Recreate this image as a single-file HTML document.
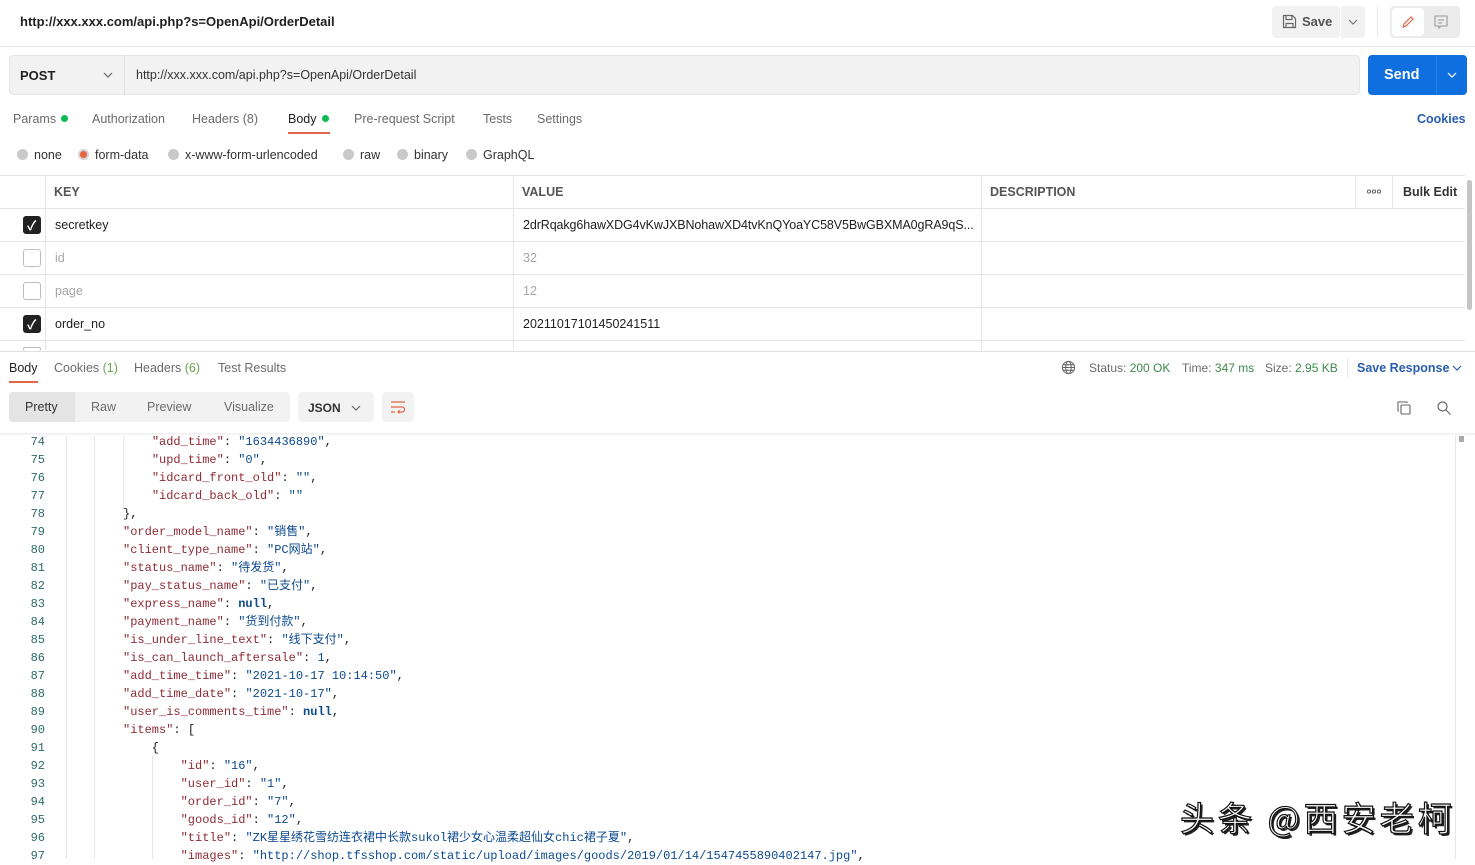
<!DOCTYPE html>
<html><head><meta charset="utf-8"><style>
*{box-sizing:border-box;margin:0;padding:0}
body{width:1475px;height:859px;overflow:hidden;background:#fff;font-family:"Liberation Sans","Noto Sans CJK SC",sans-serif;font-size:12.5px;color:#212121;position:relative}
.a{position:absolute;white-space:nowrap}
.g{color:#6b6b6b}
.code{font-family:"Liberation Mono","Noto Sans CJK SC",monospace;font-size:12px}
.k{color:#8e2b35}.s{color:#0d4a8f}.n{color:#0d4a8f;font-weight:bold}
.ln{color:#2b6a6a;width:45px;text-align:right;font-family:"Liberation Mono",monospace;font-size:12px}
.hl{position:absolute;left:0;width:1465px;height:1px;background:#e6e6e6}
.vl{position:absolute;width:1px;background:#e6e6e6}
.cb{position:absolute;left:23px;width:18px;height:18px;border-radius:3px;border:1px solid #bdbdbd;background:#fff}
.cb.on{background:#212121;border-color:#212121}
.rd{display:inline-block;width:11px;height:11px;border-radius:50%;background:#c9c9c9;vertical-align:-1px;margin-right:6px}
.dot{display:inline-block;width:7px;height:7px;border-radius:50%;background:#0cbb52;margin-left:5px;vertical-align:1px}
</style></head><body>
<svg width="0" height="0" style="position:absolute"><defs><path id="chev" d="M1 1l4 4 4-4" fill="none" stroke-width="1.2"/></defs></svg>
<!-- header -->
<div class="a" style="left:20px;top:14px;font-size:13px;font-weight:bold;color:#212121">http://xxx.xxx.com/api.php?s=OpenApi/OrderDetail</div>
<div class="a" style="left:1272px;top:6px;width:68px;height:32px;background:#f2f2f2;border-radius:4px"></div>
<svg class="a" style="left:1282px;top:14px" width="15" height="15" viewBox="0 0 15 15" fill="none" stroke="#666" stroke-width="1.2"><path d="M1.5 1.5h9l3 3v9h-12z M4 1.5v4h6v-4 M4 13.5v-4h7v4"/></svg>
<div class="a" style="left:1302px;top:14px;font-size:13px;color:#555;font-weight:bold">Save</div>
<div class="a" style="left:1341px;top:6px;width:24px;height:32px;background:#f2f2f2;border-radius:0 4px 4px 0"></div>
<svg class="a" style="left:1348px;top:19px" width="10" height="7" stroke="#777"><use href="#chev"/></svg>
<div class="a" style="left:1377px;top:7px;width:1px;height:30px;background:#e6e6e6"></div>
<div class="a" style="left:1390px;top:6px;width:70px;height:32px;background:#ececec;border-radius:4px"></div>
<div class="a" style="left:1392px;top:8px;width:32px;height:28px;background:#fff;border-radius:4px"></div>
<svg class="a" style="left:1400px;top:14px" width="16" height="16" viewBox="0 0 16 16" fill="none" stroke="#e0674a" stroke-width="1.2"><path d="M3 13l1-3 7-7 2 2-7 7z"/></svg>
<svg class="a" style="left:1433px;top:14px" width="16" height="16" viewBox="0 0 16 16" fill="none" stroke="#999" stroke-width="1.1"><path d="M2 2h12v10H8l-2 2v-2H2z M5 6h6 M5 9h4"/></svg>
<div class="hl" style="top:46px;width:1475px"></div>
<!-- URL bar -->
<div class="a" style="left:9px;top:55px;width:1351px;height:40px;background:#f2f2f2;border-radius:4px;border:1px solid #e6e6e6"></div>
<div class="a" style="left:124px;top:55px;width:1px;height:40px;background:#e0e0e0"></div>
<div class="a" style="left:20px;top:68px;font-weight:bold;font-size:13px">POST</div>
<svg class="a" style="left:103px;top:72px" width="10" height="7" stroke="#666"><use href="#chev"/></svg>
<div class="a" style="left:136px;top:68px;color:#333">http://xxx.xxx.com/api.php?s=OpenApi/OrderDetail</div>
<div class="a" style="left:1368px;top:55px;width:99px;height:40px;background:#0f6fde;border-radius:4px"></div>
<div class="a" style="left:1436px;top:55px;width:1px;height:40px;background:#2b80e6"></div>
<div class="a" style="left:1384px;top:67px;color:#fff;font-weight:bold;font-size:14.5px">Send</div>
<svg class="a" style="left:1447px;top:72px" width="10" height="7" stroke="#fff"><use href="#chev"/></svg>
<!-- tabs -->
<div class="a g" style="left:13px;top:112px">Params<span class="dot"></span></div>
<div class="a g" style="left:92px;top:112px">Authorization</div>
<div class="a g" style="left:192px;top:112px">Headers (8)</div>
<div class="a" style="left:288px;top:112px;color:#212121">Body<span class="dot"></span></div>
<div class="a" style="left:288px;top:132px;width:42px;height:2px;background:#e0674a"></div>
<div class="a g" style="left:354px;top:112px">Pre-request Script</div>
<div class="a g" style="left:483px;top:112px">Tests</div>
<div class="a g" style="left:537px;top:112px">Settings</div>
<div class="a" style="left:1417px;top:112px;color:#2a5db0;font-weight:bold">Cookies</div>
<div class="a" style="left:17px;top:148px;color:#333"><span class="rd"></span>none</div>
<div class="a" style="left:78px;top:148px;color:#333"><span class="rd" style="background:#e8643f;border:2px solid #d2d2d2"></span>form-data</div>
<div class="a" style="left:168px;top:148px;color:#333"><span class="rd"></span>x-www-form-urlencoded</div>
<div class="a" style="left:343px;top:148px;color:#333"><span class="rd"></span>raw</div>
<div class="a" style="left:397px;top:148px;color:#333"><span class="rd"></span>binary</div>
<div class="a" style="left:466px;top:148px;color:#333"><span class="rd"></span>GraphQL</div>
<!-- table -->
<div class="hl" style="top:175px"></div>
<div class="hl" style="top:208px"></div>
<div class="hl" style="top:241px"></div>
<div class="hl" style="top:274px"></div>
<div class="hl" style="top:307px"></div>
<div class="hl" style="top:340px"></div>
<div class="vl" style="left:45px;top:175px;height:175px"></div>
<div class="vl" style="left:513px;top:175px;height:175px"></div>
<div class="vl" style="left:981px;top:175px;height:175px"></div>
<div class="vl" style="left:1355px;top:175px;height:33px"></div>
<div class="vl" style="left:1392px;top:175px;height:33px"></div>
<div class="a g" style="left:54px;top:185px;font-weight:bold;color:#555">KEY</div>
<div class="a g" style="left:522px;top:185px;font-weight:bold;color:#555">VALUE</div>
<div class="a g" style="left:990px;top:185px;font-weight:bold;color:#555">DESCRIPTION</div>
<svg class="a" style="left:1367px;top:189px" width="14" height="5" fill="none" stroke="#555" stroke-width="0.9"><circle cx="2" cy="2.5" r="1.6"/><circle cx="7" cy="2.5" r="1.6"/><circle cx="12" cy="2.5" r="1.6"/></svg>
<div class="a" style="left:1403px;top:185px;font-weight:bold;color:#333">Bulk Edit</div>
<div class="a" style="left:1467px;top:180px;width:5px;height:130px;background:#c4c4c4;border-radius:3px"></div>
<div class="cb on" style="top:216px"></div><div class="a" style="left:27px;top:215px;color:#fff;font-size:13px;font-weight:bold">&#10003;</div>
<div class="cb" style="top:249px"></div>
<div class="cb" style="top:282px"></div>
<div class="cb on" style="top:315px"></div><div class="a" style="left:27px;top:314px;color:#fff;font-size:13px;font-weight:bold">&#10003;</div>
<div class="cb" style="top:347px;height:4px;border-bottom:none"></div>
<div class="a" style="left:55px;top:218px">secretkey</div>
<div class="a" style="left:523px;top:218px;letter-spacing:-0.1px">2drRqakg6hawXDG4vKwJXBNohawXD4tvKnQYoaYC58V5BwGBXMA0gRA9qS...</div>
<div class="a" style="left:55px;top:251px;color:#a6a6a6">id</div>
<div class="a" style="left:523px;top:251px;color:#a6a6a6">32</div>
<div class="a" style="left:55px;top:284px;color:#a6a6a6">page</div>
<div class="a" style="left:523px;top:284px;color:#a6a6a6">12</div>
<div class="a" style="left:55px;top:317px">order_no</div>
<div class="a" style="left:523px;top:317px">20211017101450241511</div>
<div class="hl" style="top:351px;width:1475px;background:#e0e0e0"></div>
<!-- response -->
<div class="a" style="left:9px;top:361px">Body</div>
<div class="a" style="left:9px;top:381px;width:29px;height:2px;background:#e0674a"></div>
<div class="a g" style="left:54px;top:361px">Cookies <span style="color:#6aa84f">(1)</span></div>
<div class="a g" style="left:134px;top:361px">Headers <span style="color:#6aa84f">(6)</span></div>
<div class="a g" style="left:218px;top:361px">Test Results</div>
<svg class="a" style="left:1061px;top:360px" width="15" height="15" viewBox="0 0 16 16" fill="none" stroke="#666" stroke-width="1.1"><circle cx="8" cy="8" r="6.5"/><ellipse cx="8" cy="8" rx="3" ry="6.5"/><path d="M1.5 8h13M2.5 5h11M2.5 11h11"/></svg>
<div class="a g" style="left:1089px;top:361px;font-size:12px">Status: <span style="color:#3d8a4a">200 OK</span></div>
<div class="a g" style="left:1182px;top:361px;font-size:12px">Time: <span style="color:#3d8a4a">347 ms</span></div>
<div class="a g" style="left:1265px;top:361px;font-size:12px">Size: <span style="color:#3d8a4a">2.95 KB</span></div>
<div class="a" style="left:1347px;top:358px;width:1px;height:20px;background:#e6e6e6"></div>
<div class="a" style="left:1357px;top:361px;color:#2a5db0;font-weight:bold;font-size:12.5px">Save Response</div>
<svg class="a" style="left:1452px;top:365px" width="10" height="7" stroke="#2a5db0"><use href="#chev"/></svg>
<div class="a" style="left:9px;top:392px;width:281px;height:30px;background:#f2f2f2;border-radius:4px"></div>
<div class="a" style="left:9px;top:392px;width:66px;height:30px;background:#e4e4e4;border-radius:4px 0 0 4px"></div>
<div class="a" style="left:25px;top:400px;color:#333">Pretty</div>
<div class="a g" style="left:91px;top:400px">Raw</div>
<div class="a g" style="left:147px;top:400px">Preview</div>
<div class="a g" style="left:224px;top:400px">Visualize</div>
<div class="a" style="left:298px;top:392px;width:76px;height:30px;background:#f2f2f2;border-radius:4px"></div>
<div class="a" style="left:308px;top:401px;font-weight:bold;font-size:12px;color:#333">JSON</div>
<svg class="a" style="left:351px;top:405px" width="10" height="7" stroke="#666"><use href="#chev"/></svg>
<div class="a" style="left:382px;top:392px;width:32px;height:30px;background:#f2f2f2;border-radius:4px"></div>
<svg class="a" style="left:390px;top:399px" width="16" height="16" viewBox="0 0 16 16" fill="none" stroke="#e0674a" stroke-width="1.2"><path d="M1 3h14M1 8h11a2.5 2.5 0 010 5H8m1.5-1.8L8 13l1.5 1.5M1 13h4"/></svg>
<svg class="a" style="left:1396px;top:400px" width="16" height="16" viewBox="0 0 16 16" fill="none" stroke="#666" stroke-width="1.1"><rect x="5" y="5" width="9" height="9" rx="1"/><path d="M3 11H2V2h9v1"/></svg>
<svg class="a" style="left:1436px;top:400px" width="16" height="16" viewBox="0 0 16 16" fill="none" stroke="#666" stroke-width="1.2"><circle cx="6.5" cy="6.5" r="4.5"/><path d="M10 10l4.5 4.5"/></svg>
<div class="a" style="left:0;top:433px;width:1475px;height:3px;background:linear-gradient(#eee,#fff)"></div>
<div class="vl" style="left:1455px;top:436px;height:423px;background:#e6e6e6"></div>
<div class="a" style="left:1459px;top:436px;width:5px;height:6px;background:#aaa"></div>
<!-- indent guides -->
<div class="vl" style="left:66px;top:436px;height:423px"></div>
<div class="vl" style="left:94px;top:436px;height:423px"></div>
<div class="vl" style="left:123px;top:436px;height:72px"></div>
<div class="vl" style="left:152px;top:756px;height:103px"></div>
<div class="code" style="position:absolute;left:0;top:433px;line-height:18px">
<div style="position:absolute;left:0;top:0" class="ln">74<br>75<br>76<br>77<br>78<br>79<br>80<br>81<br>82<br>83<br>84<br>85<br>86<br>87<br>88<br>89<br>90<br>91<br>92<br>93<br>94<br>95<br>96<br>97</div>
<pre class="code" style="position:absolute;left:123px;top:0;line-height:18px;font-family:'Liberation Mono','Noto Sans CJK SC',monospace">    <span class="k">"add_time"</span>: <span class="s">"1634436890"</span>,
    <span class="k">"upd_time"</span>: <span class="s">"0"</span>,
    <span class="k">"idcard_front_old"</span>: <span class="s">""</span>,
    <span class="k">"idcard_back_old"</span>: <span class="s">""</span>
},
<span class="k">"order_model_name"</span>: <span class="s">"销售"</span>,
<span class="k">"client_type_name"</span>: <span class="s">"PC网站"</span>,
<span class="k">"status_name"</span>: <span class="s">"待发货"</span>,
<span class="k">"pay_status_name"</span>: <span class="s">"已支付"</span>,
<span class="k">"express_name"</span>: <span class="n">null</span>,
<span class="k">"payment_name"</span>: <span class="s">"货到付款"</span>,
<span class="k">"is_under_line_text"</span>: <span class="s">"线下支付"</span>,
<span class="k">"is_can_launch_aftersale"</span>: <span class="s">1</span>,
<span class="k">"add_time_time"</span>: <span class="s">"2021-10-17 10:14:50"</span>,
<span class="k">"add_time_date"</span>: <span class="s">"2021-10-17"</span>,
<span class="k">"user_is_comments_time"</span>: <span class="n">null</span>,
<span class="k">"items"</span>: [
    {
        <span class="k">"id"</span>: <span class="s">"16"</span>,
        <span class="k">"user_id"</span>: <span class="s">"1"</span>,
        <span class="k">"order_id"</span>: <span class="s">"7"</span>,
        <span class="k">"goods_id"</span>: <span class="s">"12"</span>,
        <span class="k">"title"</span>: <span class="s">"ZK星星绣花雪纺连衣裙中长款sukol裙少女心温柔超仙女chic裙子夏"</span>,
        <span class="k">"images"</span>: <span class="s">"http://shop.tfsshop.com/static/upload/images/goods/2019/01/14/1547455890402147.jpg"</span>,</pre>
</div>
<div class="a" style="left:1180px;top:792px;font-family:'Noto Sans CJK SC',sans-serif;font-size:34px;color:#fff;-webkit-text-stroke:1.2px #111;text-shadow:2px 2px 0 #222;letter-spacing:4px">头条 @西安老柯</div>
</body></html>
